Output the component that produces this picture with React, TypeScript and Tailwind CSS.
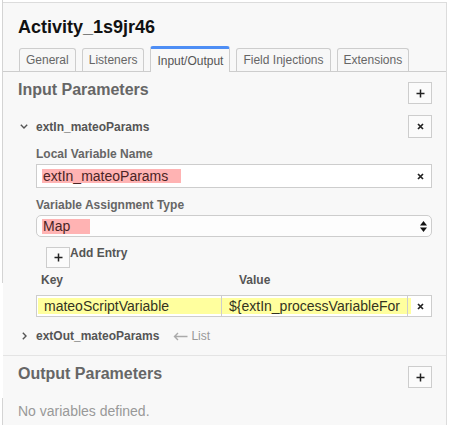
import React from 'react';

const font = { fontFamily: '"Liberation Sans", Arial, Helvetica, sans-serif' };

const PlusIcon = () => (
  <svg width="9" height="9" viewBox="0 0 9 9">
    <path d="M4.5 0.5v8M0.5 4.5h8" stroke="#222" strokeWidth="1.5" />
  </svg>
);

const CrossIcon = () => (
  <svg width="7" height="7" viewBox="0 0 7 7">
    <path d="M1 1l5 5M6 1L1 6" stroke="#222" strokeWidth="1.7" />
  </svg>
);

const ChevronDown = () => (
  <svg width="8" height="5" viewBox="0 0 8 5">
    <path d="M0.8 0.8L4 4L7.2 0.8" fill="none" stroke="#555" strokeWidth="1.4" />
  </svg>
);

const ChevronRight = () => (
  <svg width="5" height="8" viewBox="0 0 5 8">
    <path d="M0.8 0.8L4 4L0.8 7.2" fill="none" stroke="#555" strokeWidth="1.4" />
  </svg>
);

const LeftArrow = () => (
  <svg width="15" height="9" viewBox="0 0 15 9">
    <path d="M14.5 4.5H1.5M5 1L1.5 4.5L5 8" fill="none" stroke="#aaa" strokeWidth="1.4" />
  </svg>
);

const SelectArrows = () => (
  <svg width="7" height="11" viewBox="0 0 7 11">
    <path d="M3.5 0L7 4.5H0Z" fill="#111" />
    <path d="M3.5 11L7 6.5H0Z" fill="#111" />
  </svg>
);

const SquareButton: React.FC<{ children: React.ReactNode; className?: string }> = ({ children, className }) => (
  <div className={`flex w-[24px] items-center justify-center border border-[#cdcdcd] bg-[#fbfbfb] ${className ?? ''}`}>
    {children}
  </div>
);

const tabs = ['General', 'Listeners', 'Input/Output', 'Field Injections', 'Extensions'];

export default function App() {
  return (
    <div className="flex h-[425px] w-[453px] overflow-hidden bg-white" style={font}>
      {/* left edge line, broken in the middle */}
      <div className="flex w-[3px] flex-col">
        <div className="ml-[2px] h-[283px] w-px bg-[#d4d4d4]" />
        <div className="h-[115px]" />
        <div className="ml-[2px] h-[27px] w-px bg-[#d4d4d4]" />
      </div>

      <div className="mt-[2px] w-[444px] border-t border-r border-[#dcdcdc] bg-[#f8f8f8]">
        {/* header */}
        <div className="pl-[15px] pt-[13px]">
          <div className="text-[18px] font-bold leading-[22px] text-[#111]">Activity_1s9jr46</div>
        </div>

        {/* tabs */}
        <div className="mt-[8px] flex items-end gap-[6px] border-b border-[#cdcdcd] pl-[16px]">
          {tabs.map((t) =>
            t === 'Input/Output' ? (
              <div
                key={t}
                className="-mb-px flex h-[26px] items-center rounded-t-[3px] border-x border-t-[3px] border-x-[#cdcdcd] border-t-[#4e8ef5] bg-[#f8f8f8] px-[6px] text-[12px] text-[#555]"
              >
                {t}
              </div>
            ) : (
              <div
                key={t}
                className="flex h-[23px] items-center rounded-t-[3px] border-x border-t border-[#cdcdcd] bg-[#f7f7f7] px-[6px] text-[12px] text-[#666]"
              >
                {t}
              </div>
            )
          )}
        </div>

        {/* input parameters */}
        <div className="border-b border-[#e4e4e4] pb-[9px] pl-[15px] pr-[14px] pt-[8px]">
          <div className="flex items-start justify-between">
            <div className="text-[16px] font-bold leading-[20px] text-[#666]">Input Parameters</div>
            <SquareButton className="mt-[2px] h-[22px]">
              <PlusIcon />
            </SquareButton>
          </div>

          <div className="mt-[11px] flex h-[23px] items-center justify-between">
            <div className="flex items-center">
              <span className="ml-[2px] flex w-[16px]">
                <ChevronDown />
              </span>
              <span className="text-[12px] font-bold text-[#555]">extIn_mateoParams</span>
            </div>
            <SquareButton className="h-[23px]">
              <CrossIcon />
            </SquareButton>
          </div>

          <div className="pl-[18px]">
            <div className="mt-[8px] text-[12px] font-bold leading-[16px] text-[#666]">Local Variable Name</div>
            <div className="mt-[2px] flex h-[24px] items-center justify-between border border-[#cdcdcd] bg-white pl-[5px] pr-[7px]">
              <span className="bg-[#ffb3b3] pl-px pr-[13px] text-[14px] leading-[14px] text-[#4a2424]">extIn_mateoParams</span>
              <CrossIcon />
            </div>

            <div className="mt-[9px] text-[12px] font-bold leading-[16px] text-[#666]">Variable Assignment Type</div>
            <div className="mt-[2px] flex h-[22px] items-center justify-between rounded-[5px] border border-[#cdcdcd] bg-[#fdfdfd] pl-[5px] pr-[4px]">
              <span className="bg-[#ffb3b3] pl-px pr-[20px] text-[14px] leading-[15px] text-[#4a2424]">Map</span>
              <SelectArrows />
            </div>

            <div className="mt-[10px] flex items-start pl-[10px]">
              <SquareButton className="h-[21px]">
                <PlusIcon />
              </SquareButton>
              <span className="-mt-px text-[12px] font-bold leading-[14px] text-[#555]">Add Entry</span>
            </div>

            <div className="mt-[4px] flex text-[12px] font-bold leading-[16px] text-[#555]">
              <span className="w-[203px] pl-[5px]">Key</span>
              <span>Value</span>
            </div>

            <div className="mt-[7px] flex h-[22px] border border-[#cdcdcd] bg-white">
              <div className="flex w-[185px] items-center border-r border-[#cdcdcd] py-[2px] pl-px">
                <div className="flex h-full w-full items-center bg-[#ffff9e] pl-[6px] text-[14px] text-[#33331f]">
                  mateoScriptVariable
                </div>
              </div>
              <div className="flex w-[186px] items-center overflow-hidden border-r border-[#cdcdcd] py-[2px]">
                <div className="flex h-full w-full items-center overflow-hidden whitespace-nowrap bg-[#ffff9e] pl-[7px] text-[14px] text-[#33331f]">
                  {'${extIn_processVariableFor'}
                </div>
              </div>
              <div className="flex flex-1 items-center py-[2px]">
                <div className="h-full w-[3px] bg-[#ffff9e]" />
                <div className="flex flex-1 justify-center pr-[2px]">
                  <CrossIcon />
                </div>
              </div>
            </div>
          </div>

          <div className="mt-[9px] flex h-[20px] items-center">
            <span className="ml-[4px] flex w-[14px]">
              <ChevronRight />
            </span>
            <span className="text-[12px] font-bold text-[#555]">extOut_mateoParams</span>
            <span className="ml-[14px] flex">
              <LeftArrow />
            </span>
            <span className="ml-[3px] text-[12px] text-[#999]">List</span>
          </div>
        </div>

        {/* output parameters */}
        <div className="pl-[15px] pr-[14px] pt-[8px]">
          <div className="flex items-start justify-between">
            <div className="text-[16px] font-bold leading-[20px] text-[#666]">Output Parameters</div>
            <SquareButton className="mt-[2px] h-[22px]">
              <PlusIcon />
            </SquareButton>
          </div>
          <div className="mt-[14px] text-[14px] leading-[18px] text-[#999]">No variables defined.</div>
        </div>
      </div>
    </div>
  );
}
